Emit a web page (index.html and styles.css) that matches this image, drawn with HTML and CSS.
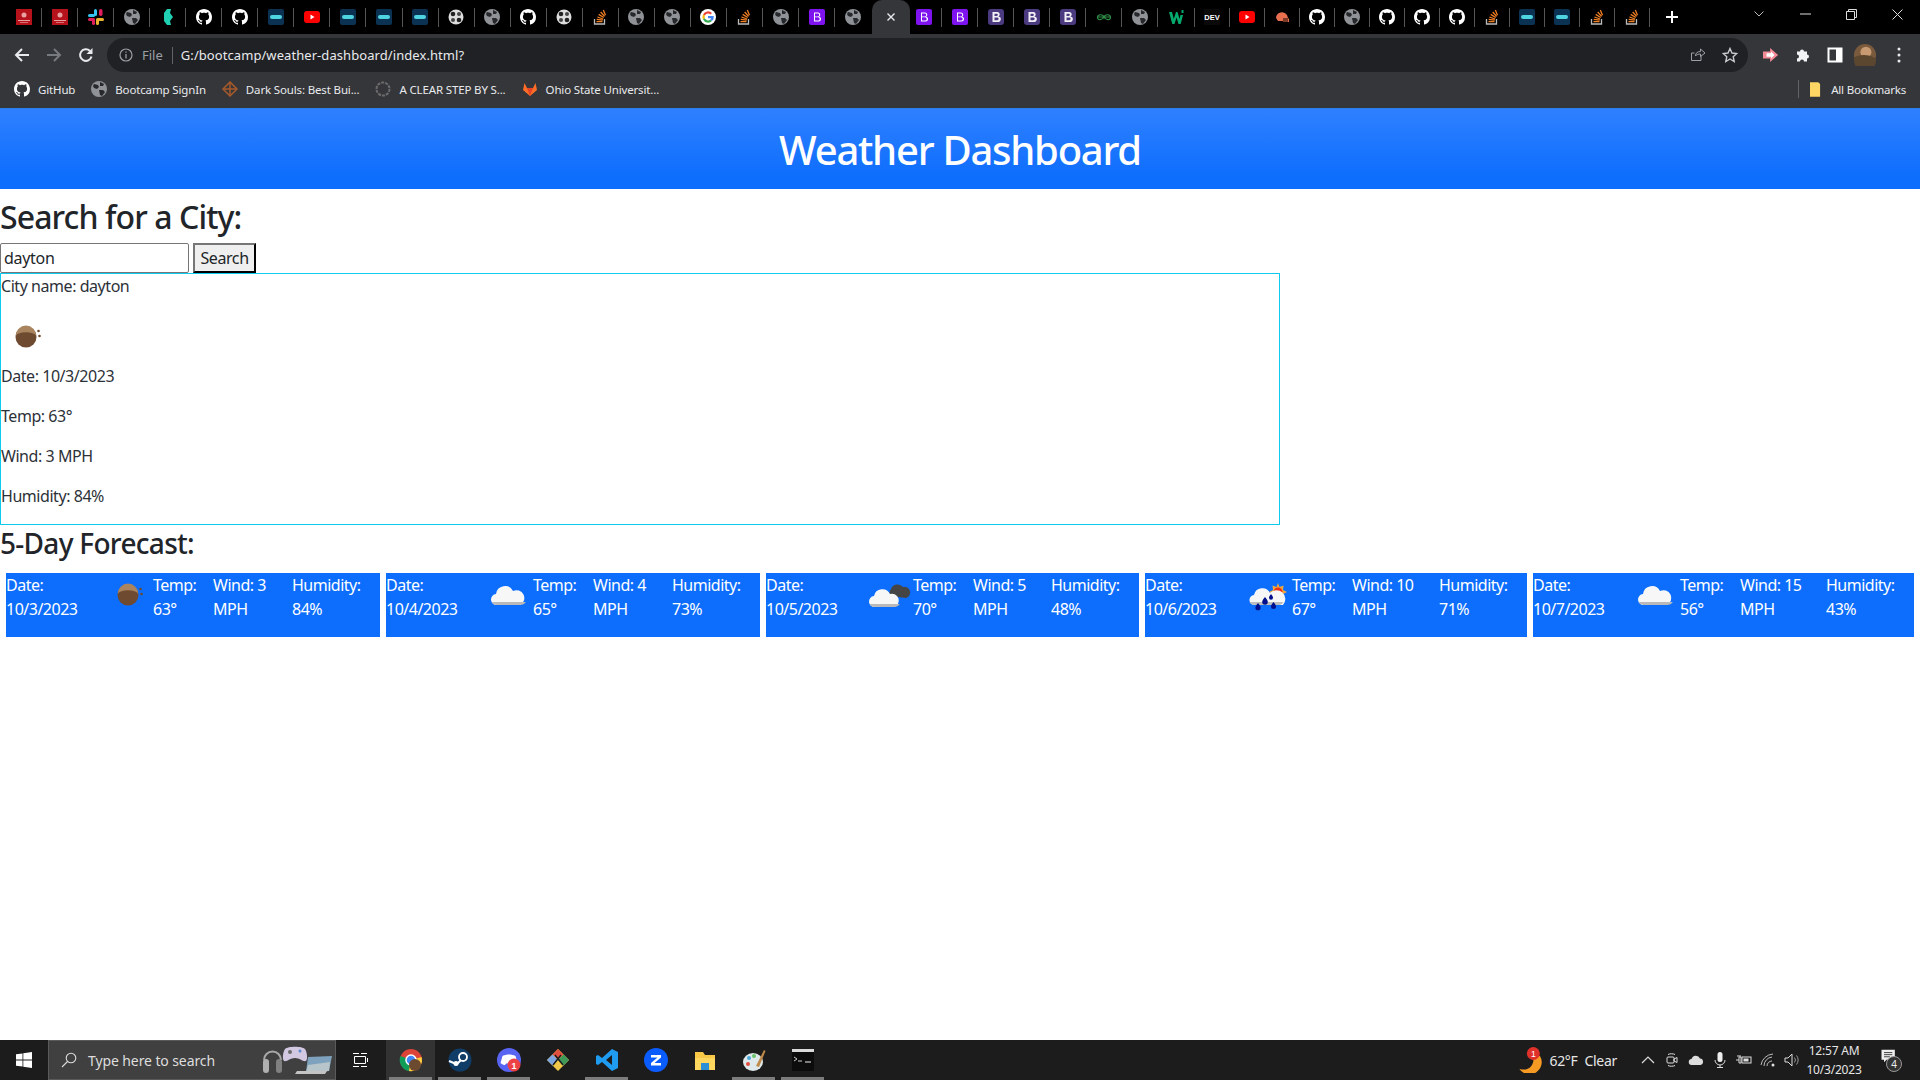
FILE: index.html
```html
<!DOCTYPE html>
<html lang="en">
<head>
<meta charset="utf-8">
<title>Weather Dashboard</title>
<link rel="stylesheet" href="styles.css">
</head>
<body>
<svg class="defs" width="0" height="0" aria-hidden="true">
  <defs>
    <symbol id="i-globe" viewBox="0 0 16 16"><circle cx="8" cy="8" r="8" fill="#8f9296"/><path d="M3 3l4 1 1 2-2 2-3-1-1-2zM9 1l4 2-1 2-3 0zM8 9l4 0 2 2-3 4-2-1z" fill="#26282b"/></symbol>
    <symbol id="i-gh" viewBox="0 0 16 16"><path fill="#fff" fill-rule="evenodd" d="M8 0C3.58 0 0 3.58 0 8c0 3.54 2.29 6.53 5.47 7.59.4.07.55-.17.55-.38 0-.19-.01-.82-.01-1.49-2.01.37-2.53-.49-2.69-.94-.09-.23-.48-.94-.82-1.13-.28-.15-.68-.52-.01-.53.63-.01 1.08.58 1.23.82.72 1.21 1.87.87 2.33.66.07-.52.28-.87.51-1.07-1.78-.2-3.64-.89-3.64-3.95 0-.87.31-1.59.82-2.15-.08-.2-.36-1.02.08-2.12 0 0 .67-.21 2.2.82.64-.18 1.32-.27 2-.27.68 0 1.36.09 2 .27 1.53-1.04 2.2-.82 2.2-.82.44 1.1.16 1.92.08 2.12.51.56.82 1.27.82 2.15 0 3.07-1.87 3.75-3.65 3.95.29.25.54.73.54 1.48 0 1.07-.01 1.93-.01 2.2 0 .21.15.46.55.38A8.013 8.013 0 0 0 16 8c0-4.42-3.58-8-8-8z"/></symbol>
    <symbol id="i-red" viewBox="0 0 16 16"><rect width="16" height="16" fill="#b5121b"/><circle cx="8" cy="6" r="2.500" fill="#e9a0a0"/><rect x="2" y="11" width="12" height="1" fill="#e9a0a0"/><rect x="4" y="13" width="8" height="1" fill="#d87070"/></symbol>
    <symbol id="i-slack" viewBox="0 0 16 16"><rect x="6" y="0" width="3" height="7" rx="1.500" fill="#36c5f0"/><rect x="0" y="5" width="7" height="3" rx="1.500" fill="#36c5f0"/><rect x="11" y="0" width="3.500" height="7" rx="1.700" fill="#e01e5a"/><rect x="8" y="9" width="8" height="3" rx="1.500" fill="#ecb22e"/><rect x="8" y="10" width="3" height="6" rx="1.500" fill="#ecb22e"/><rect x="0" y="9" width="7" height="3" rx="1.500" fill="#e01e5a"/><rect x="4" y="10" width="3" height="6" rx="1.500" fill="#e01e5a"/></symbol>
    <symbol id="i-teal" viewBox="0 0 16 16"><path d="M7 0h4l-1 4 3 4-3 4 1 4H7l-3-4V4z" fill="#1fd1b2"/></symbol>
    <symbol id="i-bar" viewBox="0 0 16 16"><rect width="16" height="16" rx="2" fill="#0b3252"/><rect x="2" y="6" width="12" height="4" rx="2" fill="#4ed3e0"/></symbol>
    <symbol id="i-yt" viewBox="0 0 16 16"><rect y="2" width="16" height="12" rx="3" fill="#f00"/><path d="M6.500 5.500l4 2.500-4 2.500z" fill="#fff"/></symbol>
    <symbol id="i-film" viewBox="0 0 16 16"><circle cx="8" cy="8" r="7.500" fill="#ddd"/><circle cx="5" cy="5" r="2.300" fill="#222"/><circle cx="11" cy="5" r="2" fill="#444"/><circle cx="5" cy="11" r="2" fill="#444"/><circle cx="11" cy="11" r="2.300" fill="#222"/></symbol>
    <symbol id="i-so" viewBox="0 0 16 16"><path d="M2.500 10v5h10v-5" fill="none" stroke="#bcbbbb" stroke-width="1.300"/><path d="M4.500 12.700h6M4.700 10.400l6 .8M5.400 8l5.700 2M6.700 5.400l5 3.100M8.700 3l3.900 4.400M11.300 1l2.200 5.300" fill="none" stroke="#f48024" stroke-width="1.300"/></symbol>
    <symbol id="i-g" viewBox="0 0 16 16"><circle cx="8" cy="8" r="8" fill="#fff"/><path d="M8 4.500A3.500 3.500 0 0 1 10.400 5.500L12 3.900A5.700 5.700 0 0 0 3 5.400L4.900 6.800A3.400 3.400 0 0 1 8 4.500z" fill="#ea4335"/><path d="M4.900 6.800L3 5.400A5.800 5.800 0 0 0 3 10.600L4.900 9.200A3.400 3.400 0 0 1 4.900 6.800z" fill="#fbbc05"/><path d="M4.900 9.200L3 10.600A5.700 5.700 0 0 0 12 12.100L10.200 10.700A3.500 3.500 0 0 1 4.900 9.200z" fill="#34a853"/><path d="M13.700 7H8v2.300h3.200A2.800 2.800 0 0 1 10.200 10.700L12 12.100A5.700 5.700 0 0 0 13.700 7z" fill="#4285f4"/></symbol>
    <symbol id="i-b" viewBox="0 0 16 16"><rect width="16" height="16" rx="2" fill="#7e13f0"/><path d="M5 3.500h4a2.200 2.200 0 0 1 1 4.200 2.300 2.300 0 0 1-.8 4.800H5zM6 4.500v2.900h2.800a1.450 1.450 0 0 0 0-2.900zM6 8.300v3.200h3.100a1.600 1.600 0 0 0 0-3.200z" fill="#fff" fill-rule="evenodd"/></symbol>
    <symbol id="i-bd" viewBox="0 0 16 16"><rect width="16" height="16" rx="3" fill="#4c3a80"/><path d="M4.500 3h4.700a2.400 2.400 0 0 1 1.300 4.500A2.600 2.600 0 0 1 9.500 13h-5zM6.500 4.700v2.200h2.300a1.100 1.100 0 0 0 0-2.200zM6.500 8.400v2.900h2.700a1.450 1.450 0 0 0 0-2.900z" fill="#f2f0f7" fill-rule="evenodd"/></symbol>
    <symbol id="i-geek" viewBox="0 0 16 16"><path d="M8 8c-1-3-6-3-6.500 0S6 12 8 8c2 4 7 3 6.500 0S9 5 8 8zM1 8h14" fill="none" stroke="#2f8d46" stroke-width="1.200"/></symbol>
    <symbol id="i-w3" viewBox="0 0 16 16"><path d="M1 3h3l1.800 7L8 3h1.500l2 7 1-4h2.500l-2.300 9h-2.200L8.500 8.500 6.500 15H4.300z" fill="#04aa6d"/><rect x="13.500" y="1" width="2" height="3" fill="#04aa6d"/></symbol>
    <symbol id="i-dev" viewBox="0 0 16 16"><rect width="16" height="16" fill="#0a0a0a"/><text x="8" y="11" font-size="7.500" font-weight="700" text-anchor="middle" fill="#fff" font-family="Liberation Sans, sans-serif">DEV</text></symbol>
    <symbol id="i-helmet" viewBox="0 0 16 16"><path d="M2 9a6 6 0 0 1 11-3l1 3 1 1v3h-5l-1-1H4z" fill="#e8704f"/><rect x="9" y="9" width="5" height="4" fill="#7c3a26"/></symbol>
    <symbol id="i-sun" viewBox="0 0 50 50"><circle cx="25" cy="26" r="10.500" fill="#6e4a30"/><path d="M14.600 25a10.400 10.400 0 0 1 20.800 0 11 5.500 0 0 0-20.800 0z" fill="#a9845f"/><circle cx="37.500" cy="20" r="1.300" fill="#6e4a30"/><circle cx="38.500" cy="25" r="1.300" fill="#6e4a30"/></symbol>
    <symbol id="i-cloud" viewBox="0 0 50 50"><path d="M14 36a5.500 5.500 0 0 1-1-11A9 9 0 0 1 30 22a7 7 0 0 1 7 14z" fill="#f7f7f7"/><path d="M8.600 33c1 2 3 3 5.400 3h23c2.500 0 4.800-1 5.800-3z" fill="#b9b9b9"/></symbol>
    <symbol id="i-cloud2" viewBox="0 0 50 50"><path d="M27 27a7 7 0 0 1 1-7 7 7 0 0 1 12-2 5.500 5.500 0 0 1 3 11z" fill="#454545"/><path d="M12 38a5.500 5.500 0 0 1-1-11A8.500 8.500 0 0 1 27 25a6.500 6.500 0 0 1 4 13z" fill="#f7f7f7"/><path d="M6.500 35c1 2 3 3 5.500 3h19c2.500 0 4.800-1 5.800-3z" fill="#b9b9b9"/></symbol>
    <symbol id="i-rain" viewBox="0 0 50 50"><path d="M36 14l1.500 4 4-1.500-.5 4.500 4 2-4 2 .5 4.500-4-1.500-1.500 4-1.500-4-4 1.500.5-4.500-4-2 4-2-.5-4.500 4 1.500z" fill="#f2a93b"/><circle cx="36" cy="23" r="4.500" fill="#f0300f"/><path d="M13 36a5 5 0 0 1-1-10A8.500 8.500 0 0 1 28 24a6.500 6.500 0 0 1 13 12z" fill="#f7f7f7"/><path d="M7.500 33c1 2 3 3 5.500 3h24c2 0 3.500-1 4.300-3z" fill="#bdbdbd"/><g fill="#00108c"><path d="M16 34c1.800 2.300 2.600 3.500 2.600 4.700a2.600 2.600 0 0 1-5.200 0c0-1.200.8-2.400 2.600-4.700z"/><path d="M23 28c1.800 2.300 2.800 3.700 2.800 5a2.800 2.800 0 0 1-5.600 0c0-1.300 1-2.700 2.800-5z"/><path d="M29 25c1.300 1.700 2 2.700 2 3.700a2 2 0 0 1-4 0c0-1 .7-2 2-3.700z"/><path d="M31.500 33c1.800 2.300 2.500 3.300 2.500 4.500a2.500 2.500 0 0 1-5 0c0-1.200.7-2.200 2.500-4.500z"/></g></symbol>
  </defs>
</svg>

<header class="browser">
  <div class="tabstrip">
    <div class="tabs">
      <span class="tab"><svg class="fav"><use href="#i-red"/></svg></span>
      <span class="tab"><svg class="fav"><use href="#i-red"/></svg></span>
      <span class="tab"><svg class="fav"><use href="#i-slack"/></svg></span>
      <span class="tab"><svg class="fav"><use href="#i-globe"/></svg></span>
      <span class="tab"><svg class="fav"><use href="#i-teal"/></svg></span>
      <span class="tab"><svg class="fav"><use href="#i-gh"/></svg></span>
      <span class="tab"><svg class="fav"><use href="#i-gh"/></svg></span>
      <span class="tab"><svg class="fav"><use href="#i-bar"/></svg></span>
      <span class="tab"><svg class="fav"><use href="#i-yt"/></svg></span>
      <span class="tab"><svg class="fav"><use href="#i-bar"/></svg></span>
      <span class="tab"><svg class="fav"><use href="#i-bar"/></svg></span>
      <span class="tab"><svg class="fav"><use href="#i-bar"/></svg></span>
      <span class="tab"><svg class="fav"><use href="#i-film"/></svg></span>
      <span class="tab"><svg class="fav"><use href="#i-globe"/></svg></span>
      <span class="tab"><svg class="fav"><use href="#i-gh"/></svg></span>
      <span class="tab"><svg class="fav"><use href="#i-film"/></svg></span>
      <span class="tab"><svg class="fav"><use href="#i-so"/></svg></span>
      <span class="tab"><svg class="fav"><use href="#i-globe"/></svg></span>
      <span class="tab"><svg class="fav"><use href="#i-globe"/></svg></span>
      <span class="tab"><svg class="fav"><use href="#i-g"/></svg></span>
      <span class="tab"><svg class="fav"><use href="#i-so"/></svg></span>
      <span class="tab"><svg class="fav"><use href="#i-globe"/></svg></span>
      <span class="tab"><svg class="fav"><use href="#i-b"/></svg></span>
      <span class="tab tab-last"><svg class="fav"><use href="#i-globe"/></svg></span>
      <span class="tab-active">
        <svg class="close-x" viewBox="0 0 10 10"><path d="M1.500 1.500l7 7M8.500 1.500l-7 7" stroke="#e8eaed" stroke-width="1.400"/></svg>
      </span>
      <span class="tab"><svg class="fav"><use href="#i-b"/></svg></span>
      <span class="tab"><svg class="fav"><use href="#i-b"/></svg></span>
      <span class="tab"><svg class="fav"><use href="#i-bd"/></svg></span>
      <span class="tab"><svg class="fav"><use href="#i-bd"/></svg></span>
      <span class="tab"><svg class="fav"><use href="#i-bd"/></svg></span>
      <span class="tab"><svg class="fav"><use href="#i-geek"/></svg></span>
      <span class="tab"><svg class="fav"><use href="#i-globe"/></svg></span>
      <span class="tab"><svg class="fav"><use href="#i-w3"/></svg></span>
      <span class="tab tab-n"><svg class="fav"><use href="#i-dev"/></svg></span>
      <span class="tab tab-n"><svg class="fav"><use href="#i-yt"/></svg></span>
      <span class="tab tab-n"><svg class="fav"><use href="#i-helmet"/></svg></span>
      <span class="tab tab-n"><svg class="fav"><use href="#i-gh"/></svg></span>
      <span class="tab tab-n"><svg class="fav"><use href="#i-globe"/></svg></span>
      <span class="tab tab-n"><svg class="fav"><use href="#i-gh"/></svg></span>
      <span class="tab tab-n"><svg class="fav"><use href="#i-gh"/></svg></span>
      <span class="tab tab-n"><svg class="fav"><use href="#i-gh"/></svg></span>
      <span class="tab tab-n"><svg class="fav"><use href="#i-so"/></svg></span>
      <span class="tab tab-n"><svg class="fav"><use href="#i-bar"/></svg></span>
      <span class="tab tab-n"><svg class="fav"><use href="#i-bar"/></svg></span>
      <span class="tab tab-n"><svg class="fav"><use href="#i-so"/></svg></span>
      <span class="tab tab-n"><svg class="fav"><use href="#i-so"/></svg></span>
      <span class="newtab"><svg width="14" height="14" viewBox="0 0 14 14"><path d="M7 1v12M1 7h12" stroke="#fff" stroke-width="2"/></svg></span>
    </div>
    <div class="winctl">
      <svg width="12" height="8" viewBox="0 0 12 8"><path d="M1.500 1.500L6 6l4.500-4.500" fill="none" stroke="#bbb"/></svg>
      <svg width="11" height="2" viewBox="0 0 11 2"><path d="M0 1h11" stroke="#ddd"/></svg>
      <svg width="11" height="11" viewBox="0 0 11 11"><path d="M.5 2.500h8v8h-8zM2.500 2.500v-2h8v8h-2" fill="none" stroke="#ddd"/></svg>
      <svg width="11" height="11" viewBox="0 0 11 11"><path d="M.5.500l10 10M10.500.500l-10 10" stroke="#ddd"/></svg>
    </div>
  </div>

  <div class="toolbar">
    <svg class="navbtn" viewBox="0 0 16 16"><path d="M15 8H2M8 2L2 8l6 6" fill="none" stroke="#e8eaed" stroke-width="2"/></svg>
    <svg class="navbtn" viewBox="0 0 16 16"><path d="M1 8h13M8 2l6 6-6 6" fill="none" stroke="#777a7f" stroke-width="2"/></svg>
    <svg class="navbtn" viewBox="0 0 16 16"><path d="M13.500 9.500A5.800 5.800 0 1 1 12 4" fill="none" stroke="#e8eaed" stroke-width="2"/><path d="M14.500 1v6h-6z" fill="#e8eaed"/></svg>
    <div class="omnibox">
      <svg class="info" viewBox="0 0 14 14"><circle cx="7" cy="7" r="6" fill="none" stroke="#9aa0a6" stroke-width="1.200"/><path d="M7 6v4.500M7 3.500v1.300" stroke="#9aa0a6" stroke-width="1.300"/></svg>
      <span class="scheme">File</span>
      <span class="url">G:/bootcamp/weather-dashboard/index.html?</span>
      <svg class="omni-act" viewBox="0 0 16 16"><path d="M11 8v5.500H1.500V6h3M5.500 9c0-3 2-4.500 5-4.500V2l4.500 4-4.500 3.500V7c-2 0-4 .5-5 2z" fill="none" stroke="#9aa0a6"/></svg>
      <svg class="omni-act star" viewBox="0 0 16 16"><path d="M8 1.500l2 4.500 4.800.5-3.600 3.200 1 4.800L8 12l-4.200 2.500 1-4.800L1.200 6.500 6 6z" fill="none" stroke="#c8cacc" stroke-width="1.400"/></svg>
    </div>
    <div class="tool-icons">
      <svg class="tool" viewBox="0 0 18 16"><path d="M0 4h8V0l9 8-9 8v-4H0z" fill="#f28b96"/><path d="M4 6h5V4l4 4-4 4v-2H4z" fill="#fff"/></svg>
      <svg class="tool" viewBox="0 0 16 16"><path d="M1 5h3a2 2 0 1 1 4 0h3v3a2 2 0 1 1 0 4v3H8a2 2 0 1 0-4 0H1v-3a2 2 0 1 0 0-4z" fill="#f1f3f4" transform="translate(1 -.5)"/></svg>
      <svg class="tool" viewBox="0 0 16 16"><rect x="1.500" y="1.500" width="13" height="13" fill="none" stroke="#fff" stroke-width="2"/><rect x="9" y="1.500" width="6" height="13" fill="#fff"/></svg>
      <svg class="avatar" viewBox="0 0 24 24"><circle cx="12" cy="12" r="12" fill="#7a5a3c"/><circle cx="13" cy="9" r="6" fill="#c79a72"/><path d="M0 15c6-4 16-4 24 1v2a12 12 0 0 1-24 0z" fill="#5b4630"/></svg>
      <svg class="kebab" viewBox="0 0 4 16"><circle cx="2" cy="2" r="1.500" fill="#e8eaed"/><circle cx="2" cy="8" r="1.500" fill="#e8eaed"/><circle cx="2" cy="14" r="1.500" fill="#e8eaed"/></svg>
    </div>
  </div>

  <nav class="bookmarks">
    <a class="bm"><svg class="fav"><use href="#i-gh"/></svg>GitHub</a>
    <a class="bm"><svg class="fav"><use href="#i-globe"/></svg>Bootcamp SignIn</a>
    <a class="bm"><svg class="fav" viewBox="0 0 16 16"><path d="M8 1l7 7-7 7-7-7z" fill="none" stroke="#a65a2a" stroke-width="1.500"/><path d="M1 8h14M8 1v14" stroke="#a65a2a" stroke-width="1.500"/></svg>Dark Souls: Best Bui...</a>
    <a class="bm"><svg class="fav" viewBox="0 0 16 16"><circle cx="8" cy="8" r="6.500" fill="none" stroke="#6b6b6b" stroke-width="2" stroke-dasharray="3 1"/></svg>A CLEAR STEP BY S...</a>
    <a class="bm"><svg class="fav" viewBox="0 0 16 16"><path d="M8 15L1 9l1.500-7L5 7h6l2.500-5L15 9z" fill="#fc6d26"/><path d="M8 15L5 7h6z" fill="#e24329"/></svg>Ohio State Universit...</a>
    <span class="all-bm"><svg class="folder" viewBox="0 0 12 16"><path d="M0 0h9l2 2v14H0z" fill="#fdd663"/></svg>All Bookmarks</span>
  </nav>
</header>

<div class="page">
  <div class="banner"><h1>Weather Dashboard</h1></div>
  <h2 class="search-title">Search for a City:</h2>
  <form class="search-form">
    <input class="city-input" type="text" value="dayton">
    <button class="search-btn" type="button">Search</button>
  </form>
  <section class="current">
    <p class="cur-line">City name: dayton</p>
    <svg class="cur-icon"><use href="#i-sun"/></svg>
    <p class="cur-line">Date: 10/3/2023</p>
    <p class="cur-line">Temp: 63°</p>
    <p class="cur-line">Wind: 3 MPH</p>
    <p class="cur-line">Humidity: 84%</p>
  </section>
  <h3 class="forecast-title">5-Day Forecast:</h3>
  <section class="forecast">
    <article class="day">
      <p class="f-date">Date: 10/3/2023</p><svg class="f-icon"><use href="#i-sun"/></svg><p class="f-temp">Temp: 63°</p><p class="f-wind">Wind: 3 MPH</p><p class="f-hum">Humidity: 84%</p>
    </article>
    <article class="day">
      <p class="f-date">Date: 10/4/2023</p><svg class="f-icon"><use href="#i-cloud"/></svg><p class="f-temp">Temp: 65°</p><p class="f-wind">Wind: 4 MPH</p><p class="f-hum">Humidity: 73%</p>
    </article>
    <article class="day">
      <p class="f-date">Date: 10/5/2023</p><svg class="f-icon"><use href="#i-cloud2"/></svg><p class="f-temp">Temp: 70°</p><p class="f-wind">Wind: 5 MPH</p><p class="f-hum">Humidity: 48%</p>
    </article>
    <article class="day">
      <p class="f-date">Date: 10/6/2023</p><svg class="f-icon"><use href="#i-rain"/></svg><p class="f-temp">Temp: 67°</p><p class="f-wind">Wind: 10 MPH</p><p class="f-hum">Humidity: 71%</p>
    </article>
    <article class="day">
      <p class="f-date">Date: 10/7/2023</p><svg class="f-icon"><use href="#i-cloud"/></svg><p class="f-temp">Temp: 56°</p><p class="f-wind">Wind: 15 MPH</p><p class="f-hum">Humidity: 43%</p>
    </article>
  </section>
</div>

<footer class="taskbar">
  <svg class="tb-win" viewBox="0 0 16 16"><path d="M0 2.300l6.500-.9v6.200H0zM7.300 1.300L16 0v7.600H7.300zM0 8.400h6.500v6.200L0 13.700zM7.300 8.400H16V16l-8.700-1.200z" fill="#fff"/></svg>
  <div class="tb-search">
    <svg class="tb-glass" viewBox="0 0 16 16"><circle cx="10" cy="6" r="4.800" fill="none" stroke="#ddd" stroke-width="1.100"/><path d="M6.500 9.500L1 15" stroke="#ddd" stroke-width="1.100"/></svg>
    <span class="tb-ph">Type here to search</span>
    <svg class="tb-art" viewBox="0 0 72 32"><path d="M3 16a8.500 8.500 0 0 1 17 0" fill="none" stroke="#a8a8a8" stroke-width="2"/><rect x="2" y="15" width="6" height="14" rx="3" fill="#b0b0b0"/><rect x="15" y="15" width="6" height="14" rx="3" fill="#808080"/><path d="M24 5c3-3 17-3 20 0 2 3 3 10 1 12-3 1-6-3-11-3s-8 4-11 3c-2-2-1-9 1-12z" fill="#d2c8e2"/><circle cx="39" cy="7" r="1.500" fill="#5a8ad0"/><circle cx="29" cy="8" r="2" fill="#6a6a6a"/><path d="M47 13l24-1-3 15-23 1z" fill="#7ea2bd"/><path d="M47 21l22-3-1 9-23 1z" fill="#b7c4c9"/><path d="M36 27h30l-2 3H34z" fill="#c4c4c4"/></svg>
  </div>
  <svg class="tb-view" viewBox="0 0 16 16"><path d="M2.500 4.500h11v7h-11z" fill="none" stroke="#fff"/><path d="M1 1.500h6M9 1.500h6M1 14.500h6M9 14.500h6M15.500 6v4" stroke="#fff"/></svg>
  <div class="tb-apps">
    <span class="app app-active"><svg class="app-ic" viewBox="0 0 24 24"><circle cx="12" cy="12" r="11" fill="#db4437"/><path d="M12 12L1.500 8A11 11 0 0 0 10 23z" fill="#0f9d58"/><path d="M12 12l10.500-3A11 11 0 0 1 10 23z" fill="#ffcd40"/><circle cx="12" cy="12" r="5" fill="#4285f4" stroke="#fff" stroke-width="1.500"/><circle cx="16" cy="17" r="6" fill="#6b4a2f"/></svg></span>
    <span class="app app-open"><svg class="app-ic" viewBox="0 0 24 24"><circle cx="12" cy="12" r="11.500" fill="#0f3d68"/><circle cx="15" cy="9" r="4" fill="none" stroke="#fff" stroke-width="1.800"/><circle cx="8" cy="15.500" r="2.500" fill="#fff"/><path d="M1 13l6 2.500M9 16l4-4" stroke="#fff" stroke-width="2"/></svg></span>
    <span class="app app-open"><svg class="app-ic" viewBox="0 0 24 24"><circle cx="12" cy="12" r="12" fill="#5865f2"/><path d="M5.500 8c4-2 9-2 13 0l2 7c-2 1.500-3 2-4.500 2l-1-1.500h-6L8 17c-1.500 0-2.500-.5-4.500-2z" fill="#fff"/><circle cx="17" cy="17" r="6.500" fill="#ed4245"/><text x="17" y="20.500" font-size="9" font-weight="700" text-anchor="middle" fill="#fff" font-family="Liberation Sans, sans-serif">1</text></svg></span>
    <span class="app"><svg class="app-ic" viewBox="0 0 24 24"><path d="M12 1l11 11-11 11L1 12z" fill="#f0c94a"/><path d="M12 1l5.500 5.500L12 12 6.500 6.500z" fill="#e0503f"/><path d="M1 12l5.500-5.500L12 12l-5.500 5.500z" fill="#7da7e0"/><path d="M12 12l5.500-5.500L23 12l-5.500 5.500z" fill="#3f9a5a"/><path d="M9 7l8 10M15 7L7 17" stroke="#1c1c1c" stroke-width="1.500"/></svg></span>
    <span class="app app-split"><svg class="app-ic" viewBox="0 0 24 24"><path d="M17 1l6 3v16l-6 3L7 14l-4 3-2-1v-8l2-1 4 3zM17 7l-6 5 6 5z" fill="#1f9cf0" fill-rule="evenodd"/></svg></span>
    <span class="app"><svg class="app-ic" viewBox="0 0 24 24"><circle cx="12" cy="12" r="12" fill="#0b5cff"/><path d="M7 7h10v2.500L10.500 15H17v2.500H7V15l6.500-5.500H7z" fill="#fff"/></svg></span>
    <span class="app"><svg class="app-ic" viewBox="0 0 24 24"><path d="M2 4h8l2 3h10v15H2z" fill="#f9c846"/><path d="M2 10h20v12H2z" fill="#ffd75e"/><path d="M8 15h8v7H8z" fill="#2b8fd8"/></svg></span>
    <span class="app app-open"><svg class="app-ic" viewBox="0 0 24 24"><ellipse cx="11" cy="14" rx="10" ry="9" fill="#dfe8ea"/><circle cx="7" cy="10" r="2" fill="#4aa8d8"/><circle cx="12" cy="8" r="2" fill="#6ac46a"/><circle cx="6" cy="16" r="2" fill="#e0503f"/><path d="M14 18L22 2l1.500 1L17 19z" fill="#c08a4a"/></svg></span>
    <span class="app app-open"><svg class="app-ic term" viewBox="0 0 24 24"><rect x="1" y="1" width="22" height="22" fill="#0c0c0c"/><rect x="1" y="1" width="22" height="3" fill="#dadada"/><path d="M3 9l3 2-3 2M7 13h4" stroke="#ccc" fill="none"/><path d="M14 14h6" stroke="#eee"/></svg></span>
  </div>
  <div class="tray">
    <svg class="tray-wx" viewBox="0 0 24 24"><path d="M22 8a11 11 0 0 1-19 12c7 3 14-2 13-10z" fill="#f59a23"/><circle cx="16" cy="6" r="6" fill="#e0302a"/><text x="16" y="9" font-size="8" text-anchor="middle" fill="#fff" font-family="Liberation Sans, sans-serif">1</text></svg>
    <span class="tray-t">62°F</span>
    <span class="tray-t tray-clear">Clear</span>
    <svg class="tr-ic tr-first" viewBox="0 0 16 16"><path d="M2 11l6-6 6 6" fill="none" stroke="#ddd" stroke-width="1.200"/></svg>
    <svg class="tr-ic" viewBox="0 0 16 16"><rect x="3" y="5" width="7" height="6" rx="1" fill="none" stroke="#ddd"/><path d="M10 7l3-1.500v5L10 9zM4 2.500c2-1 5-1 7 0M4 13.500c2 1 5 1 7 0" fill="none" stroke="#ddd"/></svg>
    <svg class="tr-ic" viewBox="0 0 16 16"><path d="M4 13a3 3 0 0 1-.5-6A4.500 4.500 0 0 1 12 6.500 3.300 3.300 0 0 1 12.500 13z" fill="#ddd"/></svg>
    <svg class="tr-ic" viewBox="0 0 16 16"><rect x="5.500" y="0" width="5" height="10" rx="2.500" fill="#eee"/><path d="M3 8a5 5 0 0 0 10 0M8 13v3M5 15.500h6" fill="none" stroke="#ddd"/></svg>
    <svg class="tr-ic" viewBox="0 0 16 16"><rect x="6" y="5" width="9" height="6" fill="none" stroke="#ddd"/><rect x="7.500" y="6.500" width="5" height="3" fill="#ddd"/><path d="M0 8h3M3 5v6h2V5zM2 3v2M4 3v2" stroke="#ddd" fill="none"/></svg>
    <svg class="tr-ic" viewBox="0 0 16 16"><path d="M1 13a13 13 0 0 1 12-11M4 14a9 9 0 0 1 8-9M7 14a5 5 0 0 1 5-5" fill="none" stroke="#bbb"/><circle cx="13" cy="13" r="1.500" fill="#ddd"/></svg>
    <svg class="tr-ic" viewBox="0 0 16 16"><path d="M1 6h3l4-4v12l-4-4H1z" fill="none" stroke="#ddd"/><path d="M10.500 5.500a4 4 0 0 1 0 5M12.500 3.500a7 7 0 0 1 0 9" fill="none" stroke="#999"/></svg>
    <div class="clock"><span>12:57 AM</span><span>10/3/2023</span></div>
    <span class="notif">
      <svg class="notif-ic" viewBox="0 0 24 24"><path d="M3 2h16v12H9l-3 3v-3H3z" fill="#eee"/><path d="M6 5.500h10M6 8h10M6 10.500h7" stroke="#222"/></svg>
      <span class="notif-badge">4</span>
    </span>
  </div>
</footer>
</body>
</html>
```
FILE: styles.css
```css
* { box-sizing: border-box; }
html, body { margin: 0; padding: 0; height: 100%; }
body {
  width: 1920px; height: 1080px; overflow: hidden; background: #fff;
  display: flex; flex-direction: column;
  font-family: "Noto Sans", "Open Sans", sans-serif; color: #212529;
}
.defs { position: absolute; }
.fav { width: 16px; height: 16px; flex: none; display: block; }

.browser { flex: none; background: #35363a; font-size: 12px; }
.tabstrip { height: 34px; background: #000; display: flex; justify-content: space-between; }
.tabs { display: flex; align-items: center; padding-left: 6px; height: 34px; }
.tab { width: 36.05px; height: 19px; display: flex; align-items: center; justify-content: center; border-right: 1px solid #555; flex: none; }
.tab-last { border-right: 0; }
.tab-n { width: 35.05px; }
.tab-active {
  width: 38px; height: 34px; background: #35363a; border-radius: 10px 10px 0 0; flex: none;
  margin: 0 -4px 0 1px; display: flex; align-items: center; justify-content: center;
}
.close-x { width: 10px; height: 10px; }
.newtab { margin-left: 15px; display: flex; }
.winctl { display: flex; align-items: center; justify-content: flex-end; gap: 35px; padding-right: 17px; height: 28px; }

.toolbar { margin-top: 4px; height: 34px; display: flex; align-items: center; padding-left: 14px; gap: 0; }
.navbtn { width: 16px; height: 16px; margin-right: 16px; flex: none; }
.omnibox {
  margin-left: -3px; width: 1641px; height: 34px; background: #202124; border-radius: 17px; flex: none;
  display: flex; align-items: center; padding-left: 12px; color: #e8eaed;
  font-size: 13px;
}
.info { width: 14px; height: 14px; flex: none; }
.scheme { color: #9aa0a6; margin-left: 9px; padding-right: 9px; border-right: 1px solid #5f6368; line-height: 17px; }
.url { margin-left: 8px; flex: 1; letter-spacing: .07px; }
.omni-act { width: 16px; height: 16px; margin-right: 16px; flex: none; }
.omni-act.star { margin-right: 10px; }
.tool-icons { flex: 1; display: flex; align-items: center; padding-left: 15px; }
.tool { width: 16px; height: 16px; margin-right: 16px; flex: none; }
.avatar { width: 22px; height: 22px; margin-right: 21px; margin-left: -5px; flex: none; }
.kebab { width: 4px; height: 16px; flex: none; }

.bookmarks { height: 36px; padding: 0 14px 2px 14px; display: flex; align-items: center; color: #e8eaed; }
.bm { display: flex; align-items: center; gap: 8px; margin-right: 16px; font-size: 11.5px; letter-spacing: -.15px; white-space: nowrap; }
.all-bm { margin-left: auto; display: flex; align-items: center; gap: 10px; font-size: 11.5px; letter-spacing: -.2px; border-left: 1px solid #5f6368; padding-left: 11px; height: 18px; }
.folder { width: 11px; height: 15px; }

.page { flex: 1; min-height: 0; }
.banner {
  height: 81px; background: linear-gradient(#2f80ff, #0d6efd 85%); display: flex; align-items: center; justify-content: center;
  border-top: 1px solid #2b7ee8; padding-top: 2px;
}
.banner h1 { margin: 0; color: #fff; font-size: 40px; font-weight: 550; line-height: 48px; letter-spacing: -1.25px; }
.search-title { margin: 9px 0 7px; font-size: 32px; font-weight: 550; line-height: 38px; letter-spacing: -.9px; }
.search-form { display: flex; height: 30px; gap: 4px; }
.city-input {
  width: 189px; height: 30px; padding: 1px 3px; margin: 0; font: 16px "Noto Sans", sans-serif; letter-spacing: -.3px; color: #212529;
  border: 1px solid #767676; border-radius: 2px; background: #fff;
}
.search-btn {
  width: 63px; height: 30px; padding: 0; font: 16px "Noto Sans", sans-serif; letter-spacing: -.4px; color: #212529;
  background: #efefef; border: 2px outset #222; border-radius: 0;
}
.current { width: 1280px; height: 252px; border: 1px solid #0dcaf0; font-size: 16px; }
.cur-line { margin: 0 0 16px; line-height: 24px; letter-spacing: -.45px; color: #2d3138; }
.cur-icon { width: 50px; height: 50px; display: block; margin-top: -3px; margin-bottom: 3px; }
.forecast-title { margin: 0 0 12px; font-size: 28px; font-weight: 550; line-height: 36px; letter-spacing: -.7px; }
.forecast { display: grid; grid-template-columns: 374px 374px 373px 382px 381px; column-gap: 6px; padding: 0 6px; }
.day { height: 64px; background: #0d6efd; color: #fff; display: flex; font-size: 16px; line-height: 24px; letter-spacing: -.5px; }
.day p { margin: 0; }
.f-date { width: 97px; }
.f-icon { width: 50px; height: 50px; flex: none; margin-top: -4px; }
.f-temp { width: 59px; }
.f-wind { flex: 1; padding-left: 1px; }
.f-hum { width: 88px; }

.taskbar { flex: none; height: 40px; background: #1c1c1c; display: flex; align-items: center; color: #e6e6e6; font-size: 14px; }
.tb-win { width: 16px; height: 16px; margin-left: 16px; flex: none; }
.tb-search { margin-left: 16px; width: 288px; height: 40px; background: #404040; border: 1px solid #5a5a5a; display: flex; align-items: center; padding-left: 12px; flex: none; }
.tb-glass { width: 16px; height: 16px; flex: none; }
.tb-ph { margin-left: 11px; font-size: 14px; letter-spacing: -.1px; color: #ddd; flex: 1; }
.tb-art { width: 72px; height: 32px; flex: none; margin-right: 2px; }
.tb-view { width: 16px; height: 16px; margin-left: 16px; flex: none; }
.tb-apps { display: flex; margin-left: 18px; }
.app { width: 49px; height: 40px; display: flex; align-items: center; justify-content: center; flex: none; position: relative; }
.app-active { background: #333; }
.app-open::after, .app-active::after, .app-split::after { content: ""; position: absolute; left: 3px; right: 3px; bottom: 0; height: 3px; background: #7c7c7c; }
.app-ic { width: 24px; height: 24px; }
.tray { margin-left: auto; display: flex; align-items: center; height: 40px; }
.tray-wx { width: 26px; height: 26px; flex: none; margin-right: 7px; }
.tray-t { font-size: 14px; letter-spacing: -.3px; }
.tray-clear { margin-left: 7px; margin-right: 23px; }
.tr-ic { width: 16px; height: 16px; flex: none; margin-right: 8px; }
.tr-first { margin-right: 8px; }
.clock { display: flex; flex-direction: column; align-items: center; font-size: 12px; line-height: 19px; letter-spacing: -.2px; margin-left: -7px; width: 66px; }
.notif { position: relative; width: 24px; height: 24px; margin: 0 17px 0 12px; flex: none; }
.notif-ic { width: 20px; height: 20px; display: block; }
.notif-badge { position: absolute; left: 7px; top: 8px; width: 16px; height: 16px; border-radius: 50%; background: #333; border: 1px solid #999; font-size: 10px; line-height: 14px; text-align: center; color: #eee; }
```
